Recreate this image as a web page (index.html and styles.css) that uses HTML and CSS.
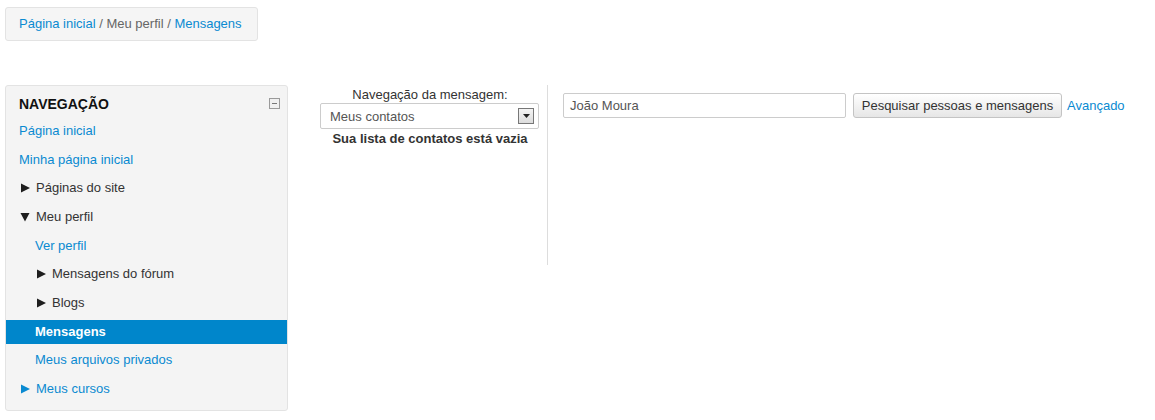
FILE: index.html
```html
<!DOCTYPE html>
<html lang="pt">
<head>
<meta charset="utf-8">
<title>Mensagens</title>
<link rel="stylesheet" href="styles.css">
</head>
<body>
<div class="page">
  <nav class="breadcrumb">
    <a href="#">Página inicial</a><span class="sep"> / </span><span class="plain">Meu perfil</span><span class="sep"> / </span><a href="#">Mensagens</a>
  </nav>
  <div class="main">
    <aside class="block">
      <div class="block-header">
        <h2>NAVEGAÇÃO</h2>
        <span class="collapse"><span class="bar"></span></span>
      </div>
      <ul class="navlist">
        <li class="lvl0"><a href="#">Página inicial</a></li>
        <li class="lvl0"><a href="#">Minha página inicial</a></li>
        <li class="lvl0 branch"><svg class="tri" width="10" height="10" viewBox="0 0 10 10"><path d="M1 0.5L10 5L1 9.5z"/></svg>Páginas do site</li>
        <li class="lvl0 branch"><svg class="tri" width="10" height="10" viewBox="0 0 10 10"><path d="M0.5 1H9.5L5 9.5z"/></svg>Meu perfil</li>
        <li class="lvl1"><a href="#">Ver perfil</a></li>
        <li class="lvl1 branch"><svg class="tri" width="10" height="10" viewBox="0 0 10 10"><path d="M1 0.5L10 5L1 9.5z"/></svg>Mensagens do fórum</li>
        <li class="lvl1 branch"><svg class="tri" width="10" height="10" viewBox="0 0 10 10"><path d="M1 0.5L10 5L1 9.5z"/></svg>Blogs</li>
        <li class="lvl1 active">Mensagens</li>
        <li class="lvl1"><a href="#">Meus arquivos privados</a></li>
        <li class="lvl0 branch link"><svg class="tri" width="10" height="10" viewBox="0 0 10 10"><path d="M1 0.5L10 5L1 9.5z"/></svg><a href="#">Meus cursos</a></li>
      </ul>
    </aside>
    <section class="messages">
      <div class="msg-nav">
        <div class="msg-label">Navegação da mensagem:</div>
        <div class="select">
          <span>Meus contatos</span>
          <span class="arrow"><svg width="7" height="4" viewBox="0 0 7 4"><path d="M0 0h7L3.5 4z" fill="#222"/></svg></span>
        </div>
        <div class="empty">Sua lista de contatos está vazia</div>
      </div>
      <div class="search">
        <div class="input">João Moura</div>
        <button class="btn">Pesquisar pessoas e mensagens</button>
        <a href="#" class="adv">Avançado</a>
      </div>
    </section>
  </div>
</div>
</body>
</html>
```
FILE: styles.css
```css
html, body {
  margin: 0;
  padding: 0;
  background: #fff;
}
body {
  font-family: "Liberation Sans", Arial, sans-serif;
  font-size: 13px;
  color: #333;
}
a {
  color: #0a8ad1;
  text-decoration: none;
}
.page {
  padding: 7px 0 0 5px;
}
.breadcrumb {
  display: inline-block;
  box-sizing: border-box;
  width: 253px;
  height: 34px;
  line-height: 32px;
  padding: 0 13px;
  background: #f5f5f5;
  border: 1px solid #e3e3e3;
  border-radius: 3px;
}
.breadcrumb .sep, .breadcrumb .plain {
  color: #666;
}
.main {
  display: flex;
  margin-top: 44px;
  align-items: flex-start;
}
.block {
  box-sizing: border-box;
  width: 283px;
  background: #f4f4f4;
  border: 1px solid #e3e3e3;
  border-radius: 3px;
  padding-bottom: 9px;
}
.block-header {
  display: flex;
  align-items: center;
  justify-content: space-between;
  height: 34px;
  padding: 0 7px 0 13px;
}
.block-header h2 {
  margin: 0;
  padding-top: 2px;
  font-size: 14px;
  font-weight: bold;
  color: #111;
}
.collapse {
  box-sizing: border-box;
  width: 11px;
  height: 11px;
  border: 1px solid #9a9a9a;
  background: #f0f0f0;
  display: flex;
  align-items: center;
  justify-content: center;
  margin-top: 1px;
}
.collapse .bar {
  width: 5px;
  height: 1px;
  background: #777;
}
.navlist {
  list-style: none;
  margin: -1px 0 0;
  padding: 0;
}
.navlist li {
  height: 24px;
  line-height: 24px;
  margin-bottom: 4.67px;
  white-space: nowrap;
  color: #333;
  display: flex;
  align-items: center;
}
.navlist li:last-child {
  margin-bottom: 0;
}
.lvl0 { padding-left: 13px; }
.lvl1 { padding-left: 29px; }
.tri {
  flex: none;
  margin: 0 6px 0 1px;
  fill: #1e1e1e;
}
.navlist li.link .tri {
  fill: #0a8ad1;
}
.navlist li.active {
  background: #0086cb;
  color: #fff;
  font-weight: bold;
}
.messages {
  display: flex;
  margin-left: 32px;
}
.msg-nav {
  width: 220px;
  padding-right: 7px;
  border-right: 1px solid #ddd;
  height: 180px;
  display: flex;
  flex-direction: column;
  align-items: center;
}
.msg-label {
  margin-top: 2px;
  line-height: 15px;
  color: #333;
}
.select {
  box-sizing: border-box;
  width: 219px;
  height: 26px;
  margin-top: 1px;
  align-self: flex-start;
  border: 1px solid #ccc;
  border-radius: 2px;
  display: flex;
  align-items: center;
  justify-content: space-between;
  padding: 0 4px 0 9px;
  color: #555;
  background: #fff;
}
.arrow {
  box-sizing: border-box;
  width: 16px;
  height: 16px;
  border: 1px solid #777;
  background: linear-gradient(#f4f4f4, #dcdcdc);
  display: flex;
  align-items: center;
  justify-content: center;
}
.empty {
  font-weight: bold;
  color: #333;
  line-height: 18px;
  margin-top: 1px;
}
.search {
  display: flex;
  align-items: center;
  margin-left: 15px;
  margin-top: 8px;
  height: 25px;
}
.input {
  box-sizing: border-box;
  width: 283px;
  height: 25px;
  line-height: 23px;
  border: 1px solid #ccc;
  border-radius: 2px;
  padding: 0 6px;
  color: #555;
}
.btn {
  box-sizing: border-box;
  margin-left: 7px;
  width: 209px;
  height: 25px;
  font-family: "Liberation Sans", Arial, sans-serif;
  font-size: 13px;
  color: #333;
  background: linear-gradient(#fff, #e6e6e6);
  border: 1px solid #c4c4c4;
  border-radius: 3px;
  padding: 0;
}
.adv {
  margin-left: 5px;
}
```
